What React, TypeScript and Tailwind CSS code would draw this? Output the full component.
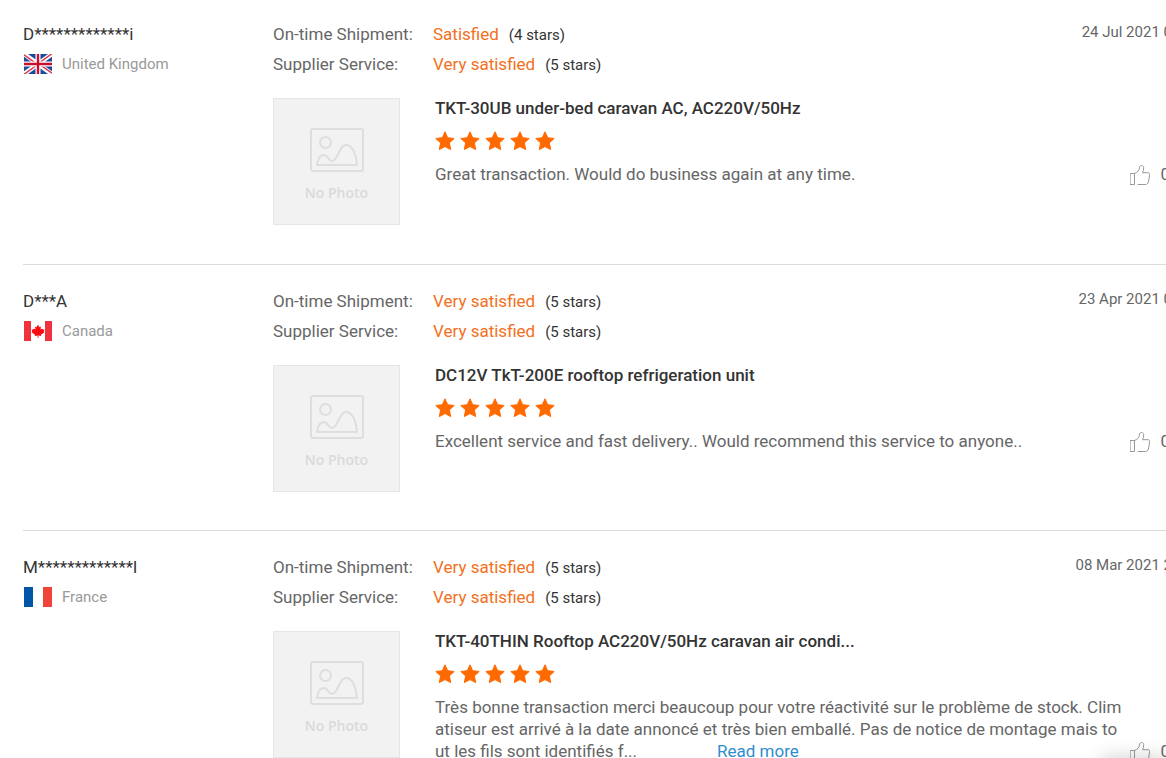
import type { ReactNode } from "react"

type Rating = { label: string; value: string; stars: string }

type Review = {
  name: string
  country: string
  flag: ReactNode
  date: string
  ratings: Rating[]
  product: string
  comment: string
  more?: boolean
}

const flagClass = "h-5 w-7 shrink-0"

const FlagUK = () => (
  <svg viewBox="0 0 28 20" className={flagClass} aria-hidden="true">
    <rect width="28" height="20" fill="#1e4a9c" />
    <path d="M0 0L28 20M28 0L0 20" stroke="#fff" strokeWidth="4.6" />
    <path d="M0 0.8L12 9.4M28 19.2L16 10.6M28 -0.4L15 9M0 20.4L13 11" stroke="#e0354b" strokeWidth="1.5" />
    <path d="M14 0V20M0 10H28" stroke="#fff" strokeWidth="5" />
    <path d="M14 0V20M0 10H28" stroke="#c8102e" strokeWidth="2.4" />
  </svg>
)

const FlagCanada = () => (
  <svg viewBox="0 0 28 20" className={flagClass} aria-hidden="true">
    <rect width="28" height="20" fill="#fff" />
    <path d="M0 0H7V20H0ZM21 0H28V20H21Z" fill="#f0323f" />
    <path
      d="M14 3.6L15.4 6.2L17 5.6L16.5 8.6L18.2 7.4L18.8 8.6L20.4 8.4L19.8 10.4L20.4 11.2L17 13.8L17.3 14.9L14.4 14.5V17H13.6V14.5L10.7 14.9L11 13.8L7.6 11.2L8.2 10.4L7.6 8.4L9.2 8.6L9.8 7.4L11.5 8.6L11 5.6L12.6 6.2Z"
      fill="#fb0a12"
    />
  </svg>
)

const FlagFrance = () => (
  <svg viewBox="0 0 28 20" className={flagClass} aria-hidden="true">
    <rect width="28" height="20" fill="#fff" />
    <rect width="9" height="20" fill="#0055a4" />
    <rect x="19" width="9" height="20" fill="#f04438" />
  </svg>
)

const reviews: Review[] = [
  {
    name: "D*************i",
    country: "United Kingdom",
    flag: <FlagUK />,
    date: "24 Jul 2021 0",
    ratings: [
      { label: "On-time Shipment:", value: "Satisfied", stars: "(4 stars)" },
      { label: "Supplier Service:", value: "Very satisfied", stars: "(5 stars)" }
    ],
    product: "TKT-30UB under-bed caravan AC, AC220V/50Hz",
    comment: "Great transaction. Would do business again at any time."
  },
  {
    name: "D***A",
    country: "Canada",
    flag: <FlagCanada />,
    date: "23 Apr 2021 0",
    ratings: [
      { label: "On-time Shipment:", value: "Very satisfied", stars: "(5 stars)" },
      { label: "Supplier Service:", value: "Very satisfied", stars: "(5 stars)" }
    ],
    product: "DC12V TkT-200E rooftop refrigeration unit",
    comment: "Excellent service and fast delivery.. Would recommend this service to anyone.."
  },
  {
    name: "M*************l",
    country: "France",
    flag: <FlagFrance />,
    date: "08 Mar 2021 2",
    ratings: [
      { label: "On-time Shipment:", value: "Very satisfied", stars: "(5 stars)" },
      { label: "Supplier Service:", value: "Very satisfied", stars: "(5 stars)" }
    ],
    product: "TKT-40THIN Rooftop AC220V/50Hz caravan air condi...",
    comment:
      "Très bonne transaction merci beaucoup pour votre réactivité sur le problème de stock. Climatiseur est arrivé à la date annoncé et très bien emballé. Pas de notice de montage mais tout les fils sont identifiés f...",
    more: true
  }
]

const Star = () => (
  <svg viewBox="0 0 20 20" className="h-5 w-5" aria-hidden="true">
    <path
      d="M10 0.8L12.7 6.7L19.2 7.5L14.4 11.9L15.7 18.6L10 15.6L4.3 18.6L5.6 11.9L0.8 7.5L7.3 6.7Z"
      fill="#ff6a00"
      stroke="#ff6a00"
      strokeWidth="1"
      strokeLinejoin="round"
    />
  </svg>
)

const ThumbUp = () => (
  <svg viewBox="0 0 20 20" className="h-5 w-5" fill="none" stroke="#999" strokeWidth="1" strokeLinejoin="round" strokeLinecap="round" aria-hidden="true">
    <path d="M0.5 8.5H4.5V19.5H0.5Z" />
    <path d="M4.5 8.5C7.5 7.6 9.4 5.4 9.7 1.8C9.9 0.1 13.6 -0.2 13.7 2.6C13.8 4.6 13.2 6.4 12.6 7.7H18C19 7.7 19.6 8.4 19.5 9.3C19.4 12 19.1 14.5 18.4 17C17.8 18.8 16.8 19.5 15.2 19.5H8" />
  </svg>
)

const NoPhoto = () => (
  <div className="flex h-[127px] w-[127px] shrink-0 flex-col items-center border border-[#e6e6e6] bg-[#f2f2f2] pt-[29px]">
    <svg viewBox="0 0 54 44" className="h-11 w-[54px]" fill="none" stroke="#dedede" strokeWidth="2" strokeLinecap="round" strokeLinejoin="round" aria-hidden="true">
      <rect x="1" y="1" width="52" height="42" rx="2" />
      <circle cx="15.5" cy="14.5" r="5.5" />
      <path d="M7 37H47C46 28 43 17 36 17C29 17 28 33 22 33C18 33 18 27 14 27C9 27 8 32 7 37Z" />
    </svg>
    <span className="mt-[10px] font-['Open_Sans',sans-serif] text-[14px] leading-[22px] font-semibold text-[#dadada]">No Photo</span>
  </div>
)

function ReviewItem({ review }: { review: Review }) {
  return (
    <article className="flex border-b border-[#dcdcdc] pt-[21px] pb-[38px] first:pt-[19px] first:pb-[39px]">
      <div className="w-[250px] shrink-0">
        <h2 className="text-[17px] leading-[30px] text-[#333]">{review.name}</h2>
        <div className="flex h-[30px] items-center gap-[10px] pl-px text-[15px] text-[#999]">
          {review.flag}
          <span>{review.country}</span>
        </div>
      </div>

      <div className="min-w-0 flex-1">
        <div className="flex justify-between">
          <dl>
            {review.ratings.map((rating) => (
              <div key={rating.label} className="flex h-[30px] text-[17px] leading-[30px]">
                <dt className="w-40 shrink-0 text-[#666]">{rating.label}</dt>
                <dd className="text-[#f37021]">
                  {rating.value}
                  <span className="ml-[10px] text-[15px] leading-none text-[#333]">{rating.stars}</span>
                </dd>
              </div>
            ))}
          </dl>
          <time className="text-[15px] leading-[26px] text-[#666]">{review.date}</time>
        </div>

        <div className="mt-[19px] flex h-[127px] gap-[35px]">
          <NoPhoto />
          <div className="min-w-0 flex-1">
            <h3 className="text-[17px] leading-5 font-medium text-[#333]">{review.product}</h3>
            <div className="mt-[13px] flex gap-[5px]" role="img" aria-label="5 stars">
              {[1, 2, 3, 4, 5].map((n) => (
                <Star key={n} />
              ))}
            </div>
            <div className="mt-3 flex items-end justify-between">
              <p className="w-full max-w-[690px] text-[17px] leading-[22px] break-all text-[#666]">
                {review.comment}
                {review.more && (
                  <a href="#more" className="ml-20 text-[#2e8ece]">
                    Read more
                  </a>
                )}
              </p>
              <button type="button" aria-label="Helpful" className="flex shrink-0 items-end gap-[10px] pr-0.5 text-[17px] leading-[22px] text-[#666]">
                <ThumbUp />
                <span>0</span>
              </button>
            </div>
          </div>
        </div>
      </div>
    </article>
  )
}

export default function App() {
  return (
    <main className="relative h-screen overflow-hidden bg-white font-[Roboto,sans-serif]">
      <div className="-mr-1.5 pl-[23px]">
        {reviews.map((review) => (
          <ReviewItem key={review.name} review={review} />
        ))}
      </div>
      {/* shadow of the floating panel below the fold */}
      <div className="pointer-events-none absolute top-full right-0 h-10 w-16 shadow-[0_0_20px_rgba(0,0,0,0.2)]" />
    </main>
  )
}
